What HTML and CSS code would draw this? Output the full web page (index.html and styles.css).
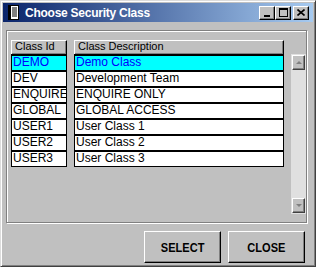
FILE: index.html
```html
<!DOCTYPE html>
<html>
<head>
<meta charset="utf-8">
<link rel="stylesheet" href="styles.css">
</head>
<body>
<div class="window">
  <div class="titlebar">
    <svg class="appicon" width="11" height="15" viewBox="0 0 11 15">
      <rect x="0.5" y="0.5" width="10" height="14" fill="#fff" stroke="#000"/>
      <rect x="0" y="0" width="3" height="15" fill="#000"/>
      <path d="M4 3h5M4 5h5M4 7h5M4 9h5M4 11h5" stroke="#000" stroke-width="1"/>
    </svg>
    <span class="title">Choose Security Class</span>
    <div class="tcontrols">
      <div class="tbtn"><svg width="6" height="2"><rect width="6" height="2" fill="#000"/></svg></div>
      <div class="tbtn"><svg width="9" height="9" viewBox="0 0 9 9"><rect x="0.5" y="0.5" width="8" height="8" fill="none" stroke="#000"/><rect x="0" y="0" width="9" height="2" fill="#000"/></svg></div>
      <div class="tbtn close"><svg width="8" height="7" viewBox="0 0 8 7"><path d="M0.5 0.5L7.5 6.5M7.5 0.5L0.5 6.5" stroke="#000" stroke-width="1.6"/></svg></div>
    </div>
  </div>
  <div class="frame">
    <div class="grid">
      <div class="hdr">Class Id</div>
      <div class="hdr">Class Description</div>
      <div></div>
      <div class="col">
        <div class="cell sel">DEMO</div>
        <div class="cell">DEV</div>
        <div class="cell">ENQUIRE</div>
        <div class="cell">GLOBAL</div>
        <div class="cell">USER1</div>
        <div class="cell">USER2</div>
        <div class="cell">USER3</div>
      </div>
      <div class="col">
        <div class="cell sel">Demo Class</div>
        <div class="cell">Development Team</div>
        <div class="cell">ENQUIRE ONLY</div>
        <div class="cell">GLOBAL ACCESS</div>
        <div class="cell">User Class 1</div>
        <div class="cell">User Class 2</div>
        <div class="cell">User Class 3</div>
      </div>
      <div class="scroll">
        <div class="sbtn"><span class="arrow up"></span></div>
        <div class="sbtn"><span class="arrow down"></span></div>
      </div>
    </div>
  </div>
  <div class="buttons">
    <div class="btn"><span>SELECT</span></div>
    <div class="btn"><span>CLOSE</span></div>
  </div>
</div>
</body>
</html>
```
FILE: styles.css
```css
html, body {
  margin: 0;
  padding: 0;
  background: #c0c0c0;
}
.window {
  width: 316px;
  height: 267px;
  box-sizing: border-box;
  background: #c0c0c0;
  border: 1px solid;
  border-color: #dcdcdc #404040 #404040 #dcdcdc;
  box-shadow: inset 1px 1px #fff, inset -1px -1px #808080;
  padding: 2px;
  display: flex;
  flex-direction: column;
  font-family: "Liberation Sans", Arial, sans-serif;
}
.titlebar {
  height: 19px;
  background: linear-gradient(to right, #0a246a, #a6caf0);
  display: flex;
  align-items: center;
  padding: 0 4px 0 5px;
}
.appicon {
  display: block;
  flex: none;
}
.title {
  margin-left: 6px;
  color: #fff;
  font-weight: bold;
  font-size: 12px;
  letter-spacing: -0.25px;
  padding-top: 1px;
  flex: 1;
  white-space: nowrap;
}
.tcontrols {
  display: flex;
  align-items: center;
}
.tbtn {
  width: 16px;
  height: 14px;
  box-sizing: border-box;
  background: #c0c0c0;
  border: 1px solid;
  border-color: #fff #000 #000 #fff;
  box-shadow: inset -1px -1px #808080;
  display: flex;
  align-items: center;
  justify-content: center;
}
.tbtn svg { display: block; }
.tbtn:first-child { align-items: flex-end; padding-bottom: 2px; }
.tbtn.close { margin-left: 2px; }
.frame {
  margin: 8px 0 0 3px;
  width: 301px;
  height: 193px;
  box-sizing: border-box;
  border: 1px solid #808080;
  box-shadow: inset 1px 1px #fff, 1px 1px #fff;
  padding: 9px 0 8px 4px;
}
.grid {
  display: grid;
  grid-template-columns: 56px 210px 15px;
  grid-template-rows: 14px 160px;
  column-gap: 7px;
}
.hdr {
  box-sizing: border-box;
  border-top: 1px solid #fff;
  border-left: 1px solid #fff;
  border-right: 1px solid #000;
  box-shadow: inset -1px -1px #808080;
  padding-left: 3px;
  font-size: 11px;
  line-height: 11px;
  color: #000;
  white-space: nowrap;
  overflow: hidden;
}
.col {
  display: flex;
  flex-direction: column;
}
.cell {
  height: 16px;
  box-sizing: border-box;
  border: 1px solid #000;
  border-top-width: 2px;
  border-bottom-width: 0;
  background: #fff;
  padding-left: 1px;
  font-size: 12px;
  line-height: 12px;
  color: #000;
  white-space: nowrap;
  overflow: hidden;
}
.cell:last-child {
  height: 17px;
  border-bottom-width: 1px;
}
.cell.sel {
  background: #00ffff;
  color: #0000ff;
}
.scroll {
  background: #e0e0e0;
  display: flex;
  flex-direction: column;
  justify-content: space-between;
  padding: 1px;
}
.sbtn {
  height: 15px;
  box-sizing: border-box;
  background: #c0c0c0;
  border: 1px solid;
  border-color: #fff #404040 #404040 #fff;
  box-shadow: inset -1px -1px #808080;
  display: flex;
  align-items: center;
  justify-content: center;
}
.arrow {
  width: 0;
  height: 0;
  border-left: 3px solid transparent;
  border-right: 3px solid transparent;
}
.arrow.up { border-bottom: 3px solid #808080; }
.arrow.down { border-top: 3px solid #808080; }
.buttons {
  margin-top: 8px;
  display: flex;
  justify-content: flex-end;
  gap: 7px;
  padding-right: 8px;
}
.btn {
  width: 77px;
  height: 32px;
  box-sizing: border-box;
  background: #c0c0c0;
  border: 1px solid;
  border-color: #fff #000 #000 #fff;
  box-shadow: inset -1px -1px #808080;
  display: flex;
  align-items: center;
  justify-content: center;
  font-weight: bold;
  font-size: 13px;
  color: #000;
}
.btn span {
  display: inline-block;
  transform: scaleX(0.85);
}
```
